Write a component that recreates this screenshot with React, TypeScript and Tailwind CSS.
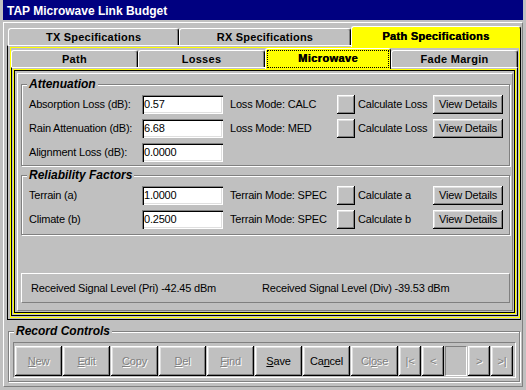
import type { ReactNode } from 'react'

const font = "font-['Liberation_Sans',Arial,sans-serif]"
const raised = 'shadow-[inset_-1px_-1px_0_#000,inset_1px_1px_0_#fff,inset_-2px_-2px_0_#808080,inset_2px_2px_0_#dfdfdf]'
const sunken = 'shadow-[inset_1px_1px_0_#808080,inset_2px_2px_0_#000,inset_-1px_-1px_0_#fff,inset_-2px_-2px_0_#dfdfdf]'
const etched = 'border border-[#808080] shadow-[inset_1px_1px_0_#fff,1px_1px_0_#fff]'
const greyed = 'text-[#808080] [text-shadow:1px_1px_0_#fff]'

type RowData = { label: string; value: string; mode?: string; calc?: string }

const attenuation: RowData[] = [
  { label: 'Absorption Loss (dB):', value: '0.57', mode: 'Loss Mode: CALC', calc: 'Calculate Loss' },
  { label: 'Rain Attenuation (dB):', value: '6.68', mode: 'Loss Mode: MED', calc: 'Calculate Loss' },
  { label: 'Alignment Loss (dB):', value: '0.0000' },
]

const reliability: RowData[] = [
  { label: 'Terrain (a)', value: '1.0000', mode: 'Terrain Mode: SPEC', calc: 'Calculate a' },
  { label: 'Climate (b)', value: '0.2500', mode: 'Terrain Mode: SPEC', calc: 'Calculate b' },
]

function OuterTab({ label, selected }: { label: string; selected?: boolean }) {
  if (selected) {
    return (
      <div className="relative z-10 -mb-[2px] flex h-[21px] w-[171px] items-center justify-center rounded-t-[3px] border-l border-t border-r border-white border-r-black bg-[#ffff00] pb-[2px] text-[11px] font-bold tracking-[0.3px] [text-shadow:0.4px_0_0_#000]">
        {label}
      </div>
    )
  }
  return (
    <div className="flex h-[17px] w-[172px] items-center justify-center rounded-t-[3px] border-l border-t border-r border-white border-r-black text-[11px] font-bold tracking-[0.2px] shadow-[inset_-1px_0_0_#808080]">
      {label}
    </div>
  )
}

function InnerTab({ label, w, selected }: { label: string; w: string; selected?: boolean }) {
  if (selected) {
    return (
      <div className={`relative z-10 -mb-[2px] flex h-[21px] ${w} items-center justify-center rounded-t-[3px] border-l border-t border-r border-white border-r-black bg-[#ffff00] pb-[2px] text-[11px] font-bold tracking-[0.4px] [text-shadow:0.4px_0_0_#000]`}>
        <div className="absolute top-[1px] right-[1px] bottom-[1px] left-[1px] border border-dotted border-black" />
        {label}
      </div>
    )
  }
  return (
    <div className={`flex h-[17px] ${w} items-center justify-center rounded-t-[3px] border-l border-t border-r border-white border-r-black text-[11px] font-bold tracking-[0.3px] shadow-[inset_-1px_0_0_#808080]`}>
      {label}
    </div>
  )
}

function Row({ label, value, mode, calc }: RowData) {
  return (
    <div className="flex h-[19px] items-center">
      <span className="w-[120px] pl-[7px]">{label}</span>
      <div className={`h-[19px] w-[81px] bg-white pl-[2px] leading-[19px] ${sunken}`}>{value}</div>
      {mode && (
        <>
          <span className="ml-[7px] w-[107px]">{mode}</span>
          <div className={`h-[19px] w-[18px] ${raised}`} />
          <span className="ml-[3px] w-[75px]">{calc}</span>
          <div className={`flex h-[19px] w-[70px] items-center justify-center ${raised}`}>View Details</div>
        </>
      )}
    </div>
  )
}

function Group({ title, className, children }: { title: string; className: string; children: ReactNode }) {
  return (
    <fieldset className={`${etched} ${className}`}>
      <legend className="ml-[5px] bg-[#c0c0c0] px-[2px] text-[12px] leading-[14px] font-bold italic tracking-normal">
        {title}
      </legend>
      {children}
    </fieldset>
  )
}

function Btn({ w, enabled, children }: { w: string; enabled?: boolean; children?: ReactNode }) {
  return (
    <div className={`flex h-[30px] ${w} items-center justify-center ${raised} ${enabled ? '' : greyed}`}>
      {children}
    </div>
  )
}

export default function App() {
  return (
    <div className={`${font} h-[390px] w-[526px] overflow-hidden bg-[#c0c0c0] px-[3px] text-[11px] tracking-[-0.2px] text-black`}>
      <div className="h-[20px] bg-[#000080] pl-[4px] pt-[3px] text-[12px] leading-[16px] font-bold tracking-normal text-white">
        TAP Microwave Link Budget
      </div>

      <div className="mt-[2px] flex h-[365px] flex-col border border-t-white border-l-white border-r-[#808080] border-b-[#808080]">
        {/* outer tab control */}
        <div className="mt-[3px] ml-[3px] w-[514px]">
          <div className="flex h-[19px] items-end pl-[1px]">
            <OuterTab label="TX Specifications" />
            <OuterTab label="RX Specifications" />
            <OuterTab label="Path Specifications" selected />
          </div>
          <div className="h-[275px] border border-black border-t-white pt-[1px] pb-[1px] pl-[2px]">
            <div className="flex h-full flex-col border border-[#ffff00] pr-[1px] pb-[1px]">
              <div className="flex h-[19px] items-end">
                <InnerTab label="Path" w="w-[127px]" />
                <InnerTab label="Losses" w="w-[127px]" />
                <InnerTab label="Microwave" w="w-[126px]" selected />
                <InnerTab label="Fade Margin" w="w-[127px]" />
              </div>
              <div className="min-h-0 flex-1 border border-black border-t-white p-[1px]">
                <div className="h-full border border-[#ffff00]">
                  <div className="h-full border border-black pt-[2px] pr-[1px] pb-[1px] pl-[2px]">
                    <div className="flex h-full flex-col border border-t-white border-l-white border-r-[#808080] border-b-[#808080] pr-[2px] pl-[3px]">
                      <Group title="Attenuation" className="mt-[3px]">
                        <div className="flex flex-col gap-[5px] pt-[4px] pb-[3px]">
                          {attenuation.map(r => <Row key={r.label} {...r} />)}
                        </div>
                      </Group>
                      <Group title="Reliability Factors" className="mt-[2px]">
                        <div className="flex flex-col gap-[5px] pt-[4px] pb-[5px]">
                          {reliability.map(r => <Row key={r.label} {...r} />)}
                        </div>
                      </Group>
                      <div className="mt-auto mb-[7px] flex h-[30px] items-center border border-t-white border-l-white border-r-[#808080] border-b-[#808080] pl-[9px]">
                        <span className="w-[231px]">Received Signal Level (Pri) -42.45 dBm</span>
                        <span>Received Signal Level (Div) -39.53 dBm</span>
                      </div>
                    </div>
                  </div>
                </div>
              </div>
            </div>
          </div>
        </div>

        {/* record controls */}
        <fieldset className={`mt-[4px] mr-[2px] ml-[4px] ${etched}`}>
          <legend className="ml-[5px] bg-[#c0c0c0] px-[2px] text-[12px] leading-[14px] font-bold italic tracking-normal">
            Record Controls
          </legend>
          <div className="mt-[4px] mr-[3px] mb-[3px] ml-[4px] flex gap-[1px] border border-t-[#808080] border-l-[#808080] border-r-white border-b-white pt-[3px] pb-[1px] pl-[1px]">
            <Btn w="w-[47px]"><span><u>N</u>ew</span></Btn>
            <Btn w="w-[47px]"><span><u>E</u>dit</span></Btn>
            <Btn w="w-[47px]"><span><u>C</u>opy</span></Btn>
            <Btn w="w-[47px]"><span><u>D</u>el</span></Btn>
            <Btn w="w-[47px]"><span><u>F</u>ind</span></Btn>
            <Btn w="w-[47px]" enabled><span><u>S</u>ave</span></Btn>
            <Btn w="w-[47px]" enabled><span>Ca<u>n</u>cel</span></Btn>
            <Btn w="w-[47px]"><span>Cl<u>o</u>se</span></Btn>
            <Btn w="w-[22px]">|&lt;</Btn>
            <Btn w="w-[22px]">&lt;</Btn>
            <div className="h-[30px] w-[22px] border border-t-[#808080] border-l-[#808080] border-r-white border-b-white" />
            <Btn w="w-[22px]">&gt;</Btn>
            <Btn w="w-[22px]">&gt;|</Btn>
          </div>
        </fieldset>
      </div>
    </div>
  )
}
